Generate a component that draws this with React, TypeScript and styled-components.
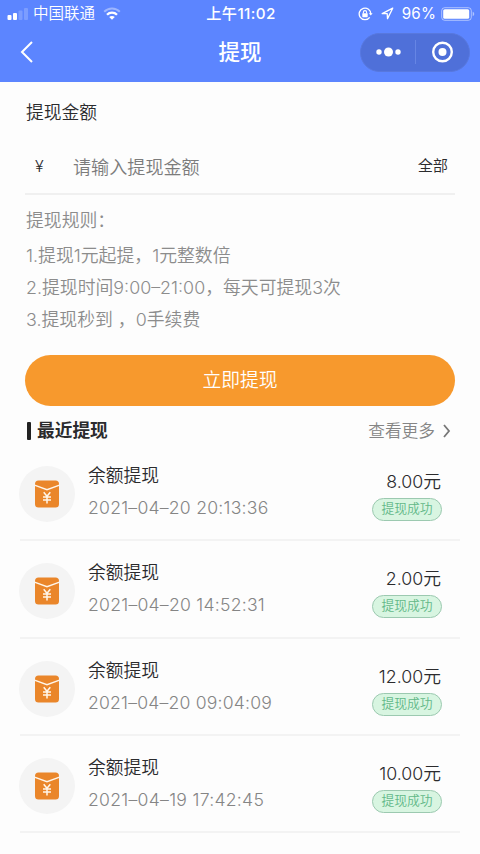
import React from "react";
import styled, { createGlobalStyle } from "styled-components";

const GlobalStyle = createGlobalStyle`
  * { box-sizing: border-box; }
  body { margin: 0; background: #fdfdfd; }
`;

const Page = styled.div`
  width: 480px;
  height: 854px;
  overflow: hidden;
  display: flex;
  flex-direction: column;
  background: #fdfdfd;
  color: #2b2b2d;
  font-family: Inter, "Noto Sans CJK SC", sans-serif;
  font-weight: 350;
  white-space: pre;
`;

const Header = styled.header`
  height: 82px;
  background: #5c85ff;
  color: #fff;
  flex: none;
`;

const StatusBar = styled.div`
  height: 27px;
  display: grid;
  grid-template-columns: 1fr auto 1fr;
  align-items: center;
  padding: 0 5px 0 7px;
  font-size: 15.5px;
  line-height: 27px;
`;

const StatusSide = styled.div<{ $end?: boolean }>`
  display: flex;
  align-items: center;
  justify-content: ${(p) => (p.$end ? "flex-end" : "flex-start")};
  gap: 8px;
`;

const Carrier = styled.span`
  margin-left: -3px;
`;

const Clock = styled.span`
  font-size: 15.2px;
  font-weight: 450;
  letter-spacing: 0.4px;
`;

const Percent = styled.span`
  font-size: 15.2px;
  font-weight: 400;
  letter-spacing: 0.2px;
  margin: 0 -3px 0 0;
`;

const NavBar = styled.div`
  height: 50px;
  display: grid;
  grid-template-columns: 110px 1fr 110px;
  align-items: center;
  padding: 0 10px;
`;

const BackButton = styled.div`
  display: flex;
  padding-left: 9px;
`;

const NavTitle = styled.h1`
  margin: 0;
  font-size: 21.5px;
  line-height: 30px;
  font-weight: 500;
  text-align: center;
`;

const Capsule = styled.div`
  width: 110px;
  height: 39px;
  border-radius: 20px;
  background: #4f70d9;
  border: 1px solid #5878de;
  display: flex;
  align-items: center;
`;

const CapsuleButton = styled.div`
  flex: 1;
  display: flex;
  justify-content: center;
`;

const CapsuleLine = styled.div`
  width: 1px;
  height: 24px;
  background: #6685e4;
`;

const FormSection = styled.section`
  padding: 1px 25px 0;
`;

const Label = styled.div`
  height: 60px;
  padding-left: 1px;
  font-size: 17.8px;
  line-height: 60px;
`;

const AmountRow = styled.div`
  height: 52px;
  display: flex;
  align-items: center;
  border-bottom: 2px solid #f0f0f0;
  padding: 0 7px 2px 10px;
`;

const Currency = styled.span`
  width: 38px;
  font-size: 16px;
  line-height: 24px;
  padding-bottom: 2px;
`;

const Placeholder = styled.span`
  flex: 1;
  font-size: 18.1px;
  line-height: 26px;
  color: #7c7c7c;
`;

const AllButton = styled.span`
  font-size: 15.2px;
  line-height: 24px;
  padding-bottom: 3px;
`;

const Rules = styled.div`
  padding: 10px 0 0 1px;
  color: #8c8c8c;
  font-size: 17.85px;
`;

const RuleLine = styled.div<{ $height?: number }>`
  height: ${(p) => p.$height ?? 32}px;
  line-height: 32px;
`;

const Submit = styled.div`
  height: 51px;
  margin-top: 19px;
  border-radius: 26px;
  background: #f7992d;
  color: #fff;
  font-size: 18.8px;
  line-height: 51px;
  text-align: center;
`;

const RecentHeader = styled.div`
  height: 26px;
  margin-top: 12px;
  padding: 0 29px 0 26px;
  display: flex;
  align-items: center;
`;

const Marker = styled.div`
  width: 4px;
  height: 18px;
  border-radius: 1px;
  background: #222;
  margin: 0 6px 0 1px;
`;

const RecentTitle = styled.h2`
  margin: 0;
  flex: 1;
  font-size: 17.7px;
  line-height: 26px;
  font-weight: 600;
`;

const More = styled.div`
  display: flex;
  align-items: center;
  gap: 7px;
  font-size: 16.7px;
  line-height: 26px;
  color: #858585;
`;

const RecordList = styled.div`
  padding: 0 20px;
`;

const Record = styled.div`
  height: 97.3px;
  display: flex;
  border-bottom: 2px solid #f3f3f3;
  padding-right: 18px;
`;

const Avatar = styled.div`
  width: 56px;
  height: 56px;
  margin: 22px 13px 0 -1px;
  border-radius: 50%;
  background: #f4f4f4;
  display: flex;
  align-items: center;
  justify-content: center;
`;

const RecordInfo = styled.div`
  flex: 1;
  padding-top: 16px;
`;

const RecordTitle = styled.div`
  height: 32px;
  font-size: 17.8px;
  line-height: 32px;
`;

const RecordTime = styled.div<{ $spacing: number }>`
  height: 32px;
  font-size: 17.6px;
  line-height: 32px;
  font-weight: 300;
  letter-spacing: ${(p) => p.$spacing}px;
  color: #858585;
`;

const RecordResult = styled.div`
  padding-top: 23px;
  display: flex;
  flex-direction: column;
  align-items: flex-end;
`;

const Amount = styled.div`
  height: 31px;
  padding-right: 1px;
  font-size: 17.8px;
  line-height: 30px;
`;

const Badge = styled.div`
  width: 70px;
  height: 23px;
  border: 1.5px solid #9cc9b0;
  border-radius: 12px;
  background: #d8f5e1;
  color: #62b888;
  font-size: 12.8px;
  line-height: 20px;
  text-align: center;
`;

const SignalIcon = () => (
  <svg width="21" height="12" viewBox="0 0 21 12" fill="#fff">
    <rect x="0.5" y="7" width="4" height="5" rx="1" />
    <rect x="6" y="5" width="4" height="7" rx="1" />
    <rect x="11.5" y="2.5" width="4" height="9.5" rx="1" opacity=".2" />
    <rect x="17" y="0" width="4" height="12" rx="1" opacity=".2" />
  </svg>
);

const WifiIcon = () => (
  <svg width="18" height="13" viewBox="0 0 18 13" fill="none" stroke="#fff" strokeWidth="2">
    <path d="M1.2 4.7C5.5.3 12.5.3 16.8 4.7" opacity=".4" />
    <path d="M4 7.7c2.8-2.8 7.2-2.8 10 0" strokeWidth="2.3" />
    <path d="M9 12.8 6.2 10c1.6-1.4 4-1.4 5.6 0z" fill="#fff" stroke="none" />
  </svg>
);

const RotationLockIcon = () => (
  <svg width="15" height="14" viewBox="0 0 15 14" fill="none" stroke="#fff" strokeWidth="1.3">
    <path d="M11.7 10.3A5.8 5.8 0 1 1 12.8 7" />
    <path d="m10.8 6.2 2 2.2 1.8-2.2z" fill="#fff" stroke="none" />
    <rect x="4.3" y="6.2" width="5.4" height="4" rx=".6" fill="#fff" stroke="none" />
    <path d="M5.4 6.5V5.2a1.6 1.6 0 0 1 3.2 0v1.3" strokeWidth="1.1" />
  </svg>
);

const LocationIcon = () => (
  <svg width="13" height="13" viewBox="0 0 13 13" fill="none" stroke="#fff" strokeWidth="1.3" strokeLinejoin="round">
    <path d="M11.7 1.2 1.2 6.6h5l.3 5z" />
  </svg>
);

const BatteryIcon = () => (
  <svg width="34" height="14" viewBox="0 0 34 14">
    <rect x=".7" y=".7" width="29.6" height="12.6" rx="3" fill="none" stroke="#fff" strokeOpacity=".5" />
    <rect x="2.2" y="2.2" width="26" height="9.6" rx="1.6" fill="#fff" />
    <path d="M31.7 4.8c2 .7 2 3.7 0 4.4z" fill="#fff" opacity=".5" />
  </svg>
);

const BackIcon = () => (
  <svg width="15" height="24" viewBox="0 0 15 24" fill="none" stroke="#fff" strokeWidth="2">
    <path d="M13 2 3 12l10 10" />
  </svg>
);

const DotsIcon = () => (
  <svg width="26" height="10" viewBox="0 0 26 10" fill="#fff">
    <circle cx="4" cy="5" r="2.7" />
    <circle cx="13.5" cy="5" r="4.5" />
    <circle cx="23" cy="5" r="2.7" />
  </svg>
);

const TargetIcon = () => (
  <svg width="22" height="22" viewBox="0 0 22 22">
    <circle cx="11.5" cy="11" r="9.3" fill="none" stroke="#fff" strokeWidth="2.4" />
    <circle cx="11.5" cy="11" r="4" fill="#fff" />
  </svg>
);

const MoreIcon = () => (
  <svg width="9" height="14" viewBox="0 0 9 14" fill="none" stroke="#777" strokeWidth="1.8">
    <path d="m2 1 5 6-5 6" />
  </svg>
);

const EnvelopeIcon = () => (
  <svg width="26" height="28" viewBox="0 0 26 28">
    <rect x="1" y="0.5" width="24" height="27" rx="3.5" fill="#ea862a" />
    <path d="M.5 5.2 13 9.7 25.5 5.2" fill="none" stroke="#fff6ea" strokeWidth="1.4" />
    <path d="m9.7 12.2 3.3 4 3.3-4M13 16.2v7.3M9 16.9h8M9 20h8" fill="none" stroke="#fff6ea" strokeWidth="1.5" />
  </svg>
);

const records = [
  { time: "2021–04–20 20:13:36", amount: "8.00元", spacing: 0.24 },
  { time: "2021–04–20 14:52:31", amount: "2.00元", spacing: 0.25 },
  { time: "2021–04–20 09:04:09", amount: "12.00元", spacing: 0.2 },
  { time: "2021–04–19 17:42:45", amount: "10.00元", spacing: 0.28 },
];

export default function App() {
  return (
    <Page>
      <GlobalStyle />
      <Header>
        <StatusBar>
          <StatusSide>
            <SignalIcon />
            <Carrier>中国联通</Carrier>
            <WifiIcon />
          </StatusSide>
          <Clock>上午11:02</Clock>
          <StatusSide $end>
            <RotationLockIcon />
            <LocationIcon />
            <Percent>96%</Percent>
            <BatteryIcon />
          </StatusSide>
        </StatusBar>
        <NavBar>
          <BackButton><BackIcon /></BackButton>
          <NavTitle>提现</NavTitle>
          <Capsule>
            <CapsuleButton><DotsIcon /></CapsuleButton>
            <CapsuleLine />
            <CapsuleButton><TargetIcon /></CapsuleButton>
          </Capsule>
        </NavBar>
      </Header>
      <FormSection>
        <Label>提现金额</Label>
        <AmountRow>
          <Currency>¥</Currency>
          <Placeholder>请输入提现金额</Placeholder>
          <AllButton>全部</AllButton>
        </AmountRow>
        <Rules>
          <RuleLine $height={35}>提现规则：</RuleLine>
          <RuleLine>1.提现1元起提，1元整数倍</RuleLine>
          <RuleLine>2.提现时间9:00–21:00，每天可提现3次</RuleLine>
          <RuleLine>3.提现秒到 ，0手续费</RuleLine>
        </Rules>
        <Submit>立即提现</Submit>
      </FormSection>
      <RecentHeader>
        <Marker />
        <RecentTitle>最近提现</RecentTitle>
        <More>查看更多<MoreIcon /></More>
      </RecentHeader>
      <RecordList>
        {records.map((r) => (
          <Record key={r.time}>
            <Avatar><EnvelopeIcon /></Avatar>
            <RecordInfo>
              <RecordTitle>余额提现</RecordTitle>
              <RecordTime $spacing={r.spacing}>{r.time}</RecordTime>
            </RecordInfo>
            <RecordResult>
              <Amount>{r.amount}</Amount>
              <Badge>提现成功</Badge>
            </RecordResult>
          </Record>
        ))}
      </RecordList>
    </Page>
  );
}
